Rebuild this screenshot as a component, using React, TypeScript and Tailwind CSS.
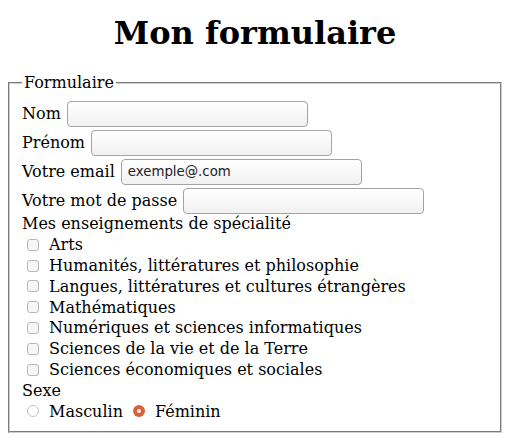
import React from 'react';

const specialites = [
  'Arts',
  'Humanités, littératures et philosophie',
  'Langues, littératures et cultures étrangères',
  'Mathématiques',
  'Numériques et sciences informatiques',
  'Sciences de la vie et de la Terre',
  'Sciences économiques et sociales',
];

const inputClass =
  "ml-[6px] w-[241px] h-[26px] rounded-[4px] border border-[#a3a3a3] bg-linear-to-b from-white to-[#f1f1f1] px-[6px] font-['DejaVu_Sans',sans-serif] text-[13.33px] text-[#222] outline-none";

const TextRow: React.FC<{ label: string; type?: string; value?: string }> = ({ label, type = 'text', value }) => (
  <div className="flex items-center h-[26px] mt-[3px]">
    <label>{label}</label>
    <input type={type} defaultValue={value} className={inputClass} />
  </div>
);

const Checkbox: React.FC<{ label: string }> = ({ label }) => (
  <label className="flex items-center h-[20.8px]">
    <span className="ml-[5px] mr-[10px] w-[12px] h-[12px] rounded-[3px] border border-[#b8b8b8] bg-[#f6f6f6]"></span>
    {label}
  </label>
);

const Radio: React.FC<{ label: string; checked?: boolean }> = ({ label, checked }) => (
  <label className="flex items-center">
    {checked ? (
      <span className="ml-[10px] mr-[10px] w-[12px] h-[12px] rounded-full bg-[#d8633a] flex items-center justify-center">
        <span className="w-[4px] h-[4px] rounded-full bg-[#fbe9e2]"></span>
      </span>
    ) : (
      <span className="ml-[5px] mr-[10px] w-[12px] h-[12px] rounded-full border border-[#c4c4c4] bg-white"></span>
    )}
    {label}
  </label>
);

export default function App() {
  return (
    <div className="px-2 font-['DejaVu_Serif',serif] text-[16px] leading-[normal] text-black bg-white">
      <h1 className="text-[32px] font-bold text-center leading-[normal] mt-[14px] mb-[21px]">Mon formulaire</h1>
      <fieldset className="border-2 [border-style:groove] border-[#cfcfcf] px-3 pt-[5.6px] pb-[9px]">
        <legend className="px-[2px]">Formulaire</legend>
        <TextRow label="Nom" />
        <TextRow label="Prénom" />
        <TextRow label="Votre email" type="email" value="exemple@.com" />
        <TextRow label="Votre mot de passe" type="password" />
        <div className="flex items-center h-[20.8px]">Mes enseignements de spécialité</div>
        {specialites.map((s) => (
          <Checkbox key={s} label={s} />
        ))}
        <div className="flex items-center h-[20.8px]">Sexe</div>
        <div className="flex items-center h-[20.8px]">
          <Radio label="Masculin" />
          <Radio label="Féminin" checked />
        </div>
      </fieldset>
    </div>
  );
}
